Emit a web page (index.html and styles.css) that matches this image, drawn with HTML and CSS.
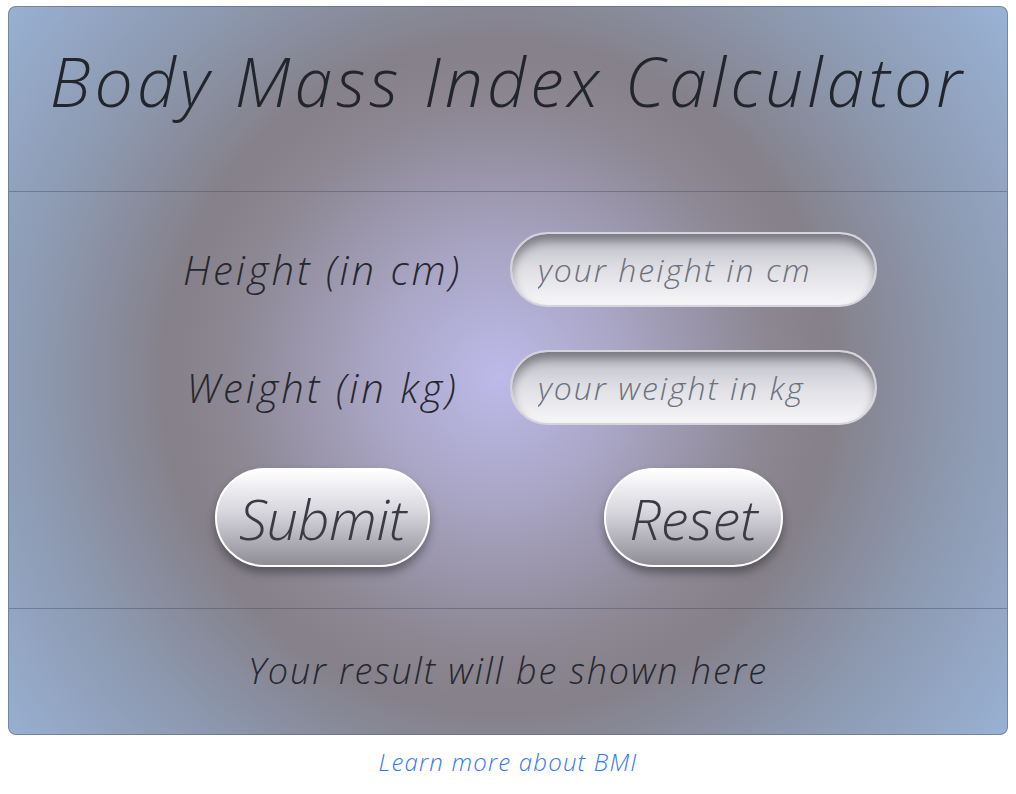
FILE: index.html
```html
<!DOCTYPE html>
<html lang="en">
<head>
<meta charset="utf-8">
<title>BMI Calculator</title>
<link rel="stylesheet" href="styles.css">
</head>
<body>
  <main class="card">
    <header class="card-header">
      <h1 class="title">Body Mass Index Calculator</h1>
    </header>
    <form class="card-form">
      <label class="label" for="height">Height (in cm)</label>
      <input class="field" id="height" type="text" placeholder="your height in cm">
      <label class="label" for="weight">Weight (in kg)</label>
      <input class="field" id="weight" type="text" placeholder="your weight in kg">
      <button class="btn btn-submit" type="button">Submit</button>
      <button class="btn btn-reset" type="button">Reset</button>
    </form>
    <footer class="card-footer">
      <p class="result">Your result will be shown here</p>
    </footer>
  </main>
  <p class="learn"><a class="learn-link" href="#">Learn more about BMI</a></p>
</body>
</html>
```

FILE: styles.css
```css
* { box-sizing: border-box; }

body {
  margin: 6px 8px 0;
  background: #ffffff;
  font-family: "Open Sans", "DejaVu Sans", sans-serif;
  font-style: italic;
  font-weight: 300;
}

.card {
  width: 1000px;
  border: 1px solid rgba(85, 100, 125, 0.55);
  border-radius: 8px;
  overflow: hidden;
  background: radial-gradient(circle at 490px 370px,
    #bdbae9 0,
    #aaa6c6 120px,
    #8c8792 270px,
    #858089 330px,
    #8c97ad 450px,
    #9ab4d8 640px);
}

.card-header {
  height: 185px;
  display: flex;
  align-items: center;
  justify-content: center;
  border-bottom: 1px solid rgba(70, 80, 100, 0.45);
}

.title {
  margin: 0 0 37px;
  font-size: 68px;
  font-weight: 300;
  font-style: italic;
  color: #22252b;
  letter-spacing: 4px;
  line-height: 1.2;
  white-space: nowrap;
}

.card-form {
  display: grid;
  grid-template-columns: 371px 371px;
  justify-content: center;
  align-items: center;
  row-gap: 43px;
  padding: 40px 0 41px;
  border-bottom: 1px solid rgba(70, 80, 100, 0.45);
}

.label {
  justify-self: center;
  font-size: 40px;
  letter-spacing: 3px;
  color: #25272e;
}

.field {
  justify-self: center;
  width: 367px;
  height: 75px;
  border: 2px solid #d4d4da;
  border-radius: 38px;
  padding: 0 24px 0 26px;
  font-family: inherit;
  font-style: italic;
  font-weight: 300;
  font-size: 32px;
  letter-spacing: 2px;
  color: #333;
  background: linear-gradient(to bottom, #b9b8c2 0%, #dcdce2 45%, #f7f7f9 100%);
  box-shadow: inset 0 7px 10px rgba(0, 0, 0, 0.35);
  outline: none;
}

.field::placeholder {
  color: #6b717d;
}

.btn {
  justify-self: center;
  height: 99px;
  border: 2px solid #ffffff;
  border-radius: 50px;
  padding: 0 20px;
  font-family: inherit;
  font-style: italic;
  font-weight: 300;
  font-size: 56px;
  color: #3a3a44;
  background: linear-gradient(to bottom, #ffffff 0%, #d6d5dc 45%, #8e8c95 100%);
  box-shadow: 0 6px 10px rgba(0, 0, 0, 0.35);
  cursor: pointer;
}

.btn-submit { width: 215px; letter-spacing: -0.5px; }
.btn-reset { width: 179px; }

.card-footer {
  height: 125px;
  display: flex;
  align-items: center;
  justify-content: center;
}

.result {
  margin: 0 0 2px;
  font-size: 36px;
  letter-spacing: 1.9px;
  color: #26282f;
}

.learn {
  margin: 10px 0 0;
  text-align: center;
  font-size: 24px;
  letter-spacing: 1.2px;
}

.learn-link {
  color: #3178f2;
  text-decoration: none;
}
```
